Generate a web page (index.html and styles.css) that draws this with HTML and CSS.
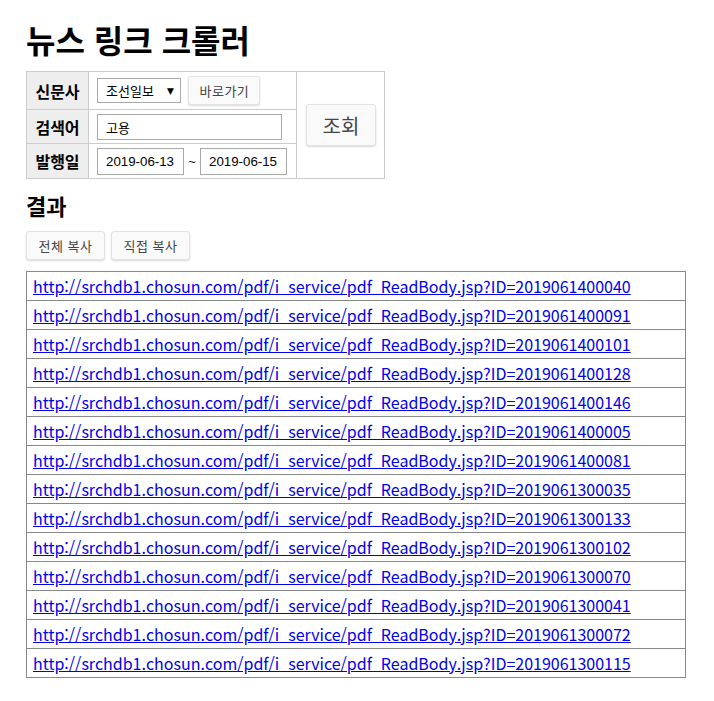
FILE: index.html
```html
<!DOCTYPE html>
<html lang="ko">
<head>
<meta charset="utf-8">
<title>뉴스 링크 크롤러</title>
<link rel="stylesheet" href="styles.css">
</head>
<body>
<div class="page">
  <h1 class="title">뉴스 링크 크롤러</h1>
  <table class="form">
    <tr>
      <th>신문사</th>
      <td class="row1">
        <span class="select">조선일보<span class="caret">▼</span></span>
        <button class="btn small">바로가기</button>
      </td>
      <td class="submit" rowspan="3"><button class="btn big">조회</button></td>
    </tr>
    <tr>
      <th>검색어</th>
      <td><span class="input keyword">고용</span></td>
    </tr>
    <tr class="last">
      <th>발행일</th>
      <td><span class="input date">2019-06-13</span><span class="tilde">~</span><span class="input date">2019-06-15</span></td>
    </tr>
  </table>
  <h2 class="subtitle">결과</h2>
  <div class="actions">
    <button class="btn small">전체 복사</button>
    <button class="btn small">직접 복사</button>
  </div>
  <ul class="links">
    <li><a href="#">http://srchdb1.chosun.com/pdf/i_service/pdf_ReadBody.jsp?ID=2019061400040</a></li>
    <li><a href="#">http://srchdb1.chosun.com/pdf/i_service/pdf_ReadBody.jsp?ID=2019061400091</a></li>
    <li><a href="#">http://srchdb1.chosun.com/pdf/i_service/pdf_ReadBody.jsp?ID=2019061400101</a></li>
    <li><a href="#">http://srchdb1.chosun.com/pdf/i_service/pdf_ReadBody.jsp?ID=2019061400128</a></li>
    <li><a href="#">http://srchdb1.chosun.com/pdf/i_service/pdf_ReadBody.jsp?ID=2019061400146</a></li>
    <li><a href="#">http://srchdb1.chosun.com/pdf/i_service/pdf_ReadBody.jsp?ID=2019061400005</a></li>
    <li><a href="#">http://srchdb1.chosun.com/pdf/i_service/pdf_ReadBody.jsp?ID=2019061400081</a></li>
    <li><a href="#">http://srchdb1.chosun.com/pdf/i_service/pdf_ReadBody.jsp?ID=2019061300035</a></li>
    <li><a href="#">http://srchdb1.chosun.com/pdf/i_service/pdf_ReadBody.jsp?ID=2019061300133</a></li>
    <li><a href="#">http://srchdb1.chosun.com/pdf/i_service/pdf_ReadBody.jsp?ID=2019061300102</a></li>
    <li><a href="#">http://srchdb1.chosun.com/pdf/i_service/pdf_ReadBody.jsp?ID=2019061300070</a></li>
    <li><a href="#">http://srchdb1.chosun.com/pdf/i_service/pdf_ReadBody.jsp?ID=2019061300041</a></li>
    <li><a href="#">http://srchdb1.chosun.com/pdf/i_service/pdf_ReadBody.jsp?ID=2019061300072</a></li>
    <li><a href="#">http://srchdb1.chosun.com/pdf/i_service/pdf_ReadBody.jsp?ID=2019061300115</a></li>
  </ul>
</div>
</body>
</html>
```
FILE: styles.css
```css
html, body {
  margin: 0;
  padding: 0;
  background: #fff;
}
.page {
  padding: 14px 26px 20px 26px;
  font-family: "Noto Sans CJK KR", "Noto Sans", sans-serif;
  color: #000;
}
.title {
  margin: 0 0 7px 0;
  font-size: 32px;
  line-height: 50px;
  font-weight: 700;
}
.form {
  border-collapse: collapse;
  border: 1px solid #ccc;
}
.form th, .form td {
  border: 1px solid #ccc;
  padding: 0 8px;
}
.form th {
  background: #eee;
  width: 45px;
  font-size: 16px;
  font-weight: 700;
  height: 33px;
  padding: 0 8px;
}
.form tr:first-child th, .form tr:first-child td.row1 { height: 37px; }
.form tr.last th { height: 34px; }
.form td.row1, .form tr td { width: 191px; }
.form td.submit {
  width: 70px;
  padding: 0 8px 0 9px;
}
.select {
  display: inline-flex;
  align-items: center;
  box-sizing: border-box;
  width: 84px;
  height: 25px;
  border: 1px solid #a9a9a9;
  padding: 0 0 0 8px;
  font-size: 13px;
  vertical-align: middle;
  background: #fff;
}
.caret {
  font-size: 9px;
  margin-left: auto;
  margin-right: 6px;
  font-family: "DejaVu Sans", sans-serif;
}
.input {
  display: inline-flex;
  align-items: center;
  box-sizing: border-box;
  height: 26px;
  border: 1px solid #a9a9a9;
  padding: 0 8px;
  font-size: 13px;
  vertical-align: middle;
  background: #fff;
}
.keyword { width: 185px; }
.date {
  width: 87px;
  height: 27px;
  font-family: "Liberation Sans", Arial, sans-serif;
  font-size: 13.3px;
}
.tilde {
  display: inline-block;
  width: 16px;
  text-align: center;
  font-family: "Liberation Sans", Arial, sans-serif;
  font-size: 13px;
  vertical-align: middle;
}
.btn {
  font-family: "Noto Sans CJK KR", sans-serif;
  background: #fafafa;
  border: 1px solid #e2e2e2;
  border-radius: 3px;
  box-shadow: 0 1px 2px rgba(0,0,0,0.15);
  color: #444;
  cursor: pointer;
  vertical-align: middle;
}
.btn.small {
  height: 29px;
  padding: 0 10px;
  font-size: 13px;
  margin-left: 3px;
  letter-spacing: 0.5px;
}
.btn.big {
  width: 70px;
  height: 42px;
  font-size: 20px;
}
.subtitle {
  margin: 10px 0 10px 0;
  font-size: 22px;
  line-height: 32px;
  font-weight: 700;
}
.actions {
  display: flex;
  gap: 6px;
}
.actions .btn.small {
  margin-left: 0;
  width: 79px;
  padding: 0;
}
.links {
  list-style: none;
  margin: 11px 0 0 0;
  padding: 0;
  border: 1px solid #888;
  border-bottom: none;
  width: 658px;
}
.links li {
  border-bottom: 1px solid #888;
  height: 28px;
  padding: 0 6px;
  display: flex;
  align-items: center;
}
.links a {
  color: #0000ee;
  font-size: 16px;
  text-decoration: underline;
}
```
